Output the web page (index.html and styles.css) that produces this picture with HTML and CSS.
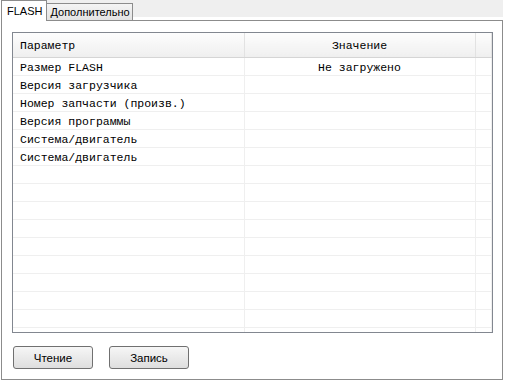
FILE: index.html
```html
<!doctype html>
<html lang="ru">
<head>
  <meta charset="UTF-8">
  <meta name="viewport" content="width=device-width, initial-scale=1">
  <title>FLASH</title>
  <link rel="stylesheet" href="styles.css">
</head>
<body>
<div class="tabs">
  <div class="tab active">FLASH</div>
  <div class="tab">Дополнительно</div>
</div>
<div class="panel">
  <div class="grid">
    <table>
      <colgroup>
        <col class="col-name">
        <col class="col-value">
        <col>
      </colgroup>
      <thead>
        <tr><th class="left">Параметр</th><th>Значение</th><th></th></tr>
      </thead>
      <tbody id="rows"></tbody>
    </table>
  </div>
  <div class="actions">
    <button class="btn">Чтение</button>
    <button class="btn">Запись</button>
  </div>
</div>

<script>
  const data = [
    ['Размер FLASH', 'Не загружено'],
    ['Версия загрузчика', ''],
    ['Номер запчасти (произв.)', ''],
    ['Версия программы', ''],
    ['Система/двигатель', ''],
    ['Система/двигатель', '']
  ];
  const rows = document.getElementById('rows');
  for (let i = 0; i < 16; i++) {
    const [name, value] = data[i] || ['', ''];
    const tr = document.createElement('tr');
    tr.innerHTML = `<td>${name}</td><td class="center">${value}</td><td></td>`;
    rows.appendChild(tr);
  }
</script>
</body>
</html>
```

FILE: styles.css
```css
body {
  margin: 0;
  background: #fff;
  font-family: "Liberation Sans", Arial, sans-serif;
  font-size: 11px;
  color: #000;
}
.tabs {
  display: flex;
  align-items: flex-end;
  height: 20px;
  margin-left: 1px;
  width: 502px;
  background: linear-gradient(#efefef 0, #efefef 17px, #fff 17px);
}
.tab {
  box-sizing: border-box;
  height: 17px;
  padding: 0 2px 0 3px;
  line-height: 16px;
  border: 1px solid #8c8c8c;
  border-bottom: none;
  background: linear-gradient(#f4f4f4, #e3e3e3);
  margin-left: -1px;
}
.tab:first-child {
  margin-left: 0;
}
.tab.active {
  height: 21px;
  margin-bottom: -1px;
  padding: 0 4px 0 5px;
  line-height: 20px;
  background: #fff;
  position: relative;
  z-index: 1;
}
.panel {
  box-sizing: border-box;
  margin-left: 1px;
  width: 502px;
  height: 360px;
  border: 1px solid #8c8c8c;
  padding: 11px 9px 0 10px;
}
.grid {
  box-sizing: border-box;
  height: 301px;
  border: 1px solid #828790;
  overflow: hidden;
  background: #fff;
}
table {
  width: 100%;
  border-collapse: collapse;
  table-layout: fixed;
  font-family: "Liberation Mono", "Courier New", monospace;
  font-size: 11.5px;
}
.col-name { width: 231px; }
.col-value { width: 231px; }
th {
  height: 24px;
  padding: 0;
  font-weight: normal;
  background: linear-gradient(#fdfdfd, #efefef);
  border-bottom: 1px solid #d5d5d5;
  border-right: 1px solid #e2e2e2;
  text-align: center;
}
th.left, td {
  text-align: left;
  padding: 0 0 0 7px;
}
td {
  height: 16px;
  padding-top: 1px;
  border-bottom: 1px solid #efefef;
  border-right: 1px solid #efefef;
  white-space: nowrap;
}
td.center {
  text-align: center;
  padding: 1px 0 0;
}
.actions {
  display: flex;
  gap: 16px;
  margin-top: 13px;
  padding-left: 1px;
}
.btn {
  box-sizing: border-box;
  width: 80px;
  height: 23px;
  padding: 0;
  border: 1px solid #707070;
  border-radius: 3px;
  background: linear-gradient(#f6f6f6, #dedede);
  font-family: "Liberation Sans", Arial, sans-serif;
  font-size: 11.5px;
  color: #000;
}
```
